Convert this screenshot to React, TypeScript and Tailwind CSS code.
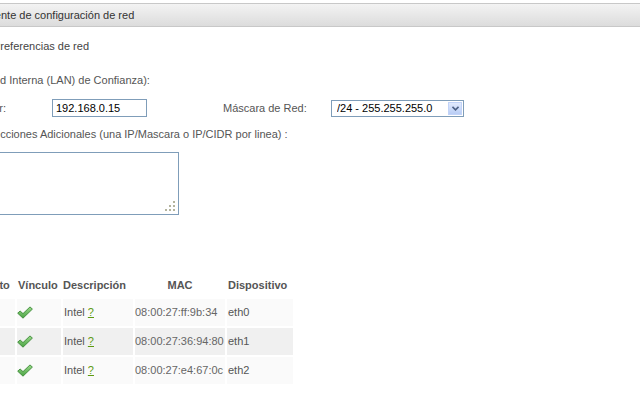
const rows = [
  { mac: '08:00:27:ff:9b:34', dev: 'eth0', bg: 'bg-[#fafafa]' },
  { mac: '08:00:27:36:94:80', dev: 'eth1', bg: 'bg-[#f0f0f0]' },
  { mac: '08:00:27:e4:67:0c', dev: 'eth2', bg: 'bg-[#fafafa]' },
];

function CheckIcon() {
  return (
    <svg width="16" height="13" viewBox="0 0 16 13" className="block">
      <defs>
        <linearGradient id="chk" x1="0" y1="0" x2="0" y2="1">
          <stop offset="0" stopColor="#9ad98a" />
          <stop offset="1" stopColor="#4aa343" />
        </linearGradient>
      </defs>
      <polygon
        points="0.7,7.2 3.1,5 6,7.6 13,0.9 15.4,3.1 6,12.2"
        fill="url(#chk)"
        stroke="#3b8a36"
        strokeWidth="0.9"
        strokeLinejoin="round"
      />
    </svg>
  );
}

function Grip() {
  return (
    <svg width="11" height="11" viewBox="0 0 11 11" className="absolute right-[3px] bottom-[3px]">
      <g fill="#b4b49e">
        <rect x="8" y="0" width="2" height="2" />
        <rect x="8" y="4" width="2" height="2" />
        <rect x="4" y="4" width="2" height="2" />
        <rect x="8" y="8" width="2" height="2" />
        <rect x="4" y="8" width="2" height="2" />
        <rect x="0" y="8" width="2" height="2" />
      </g>
    </svg>
  );
}

export default function App() {
  return (
    <div className="w-[640px] h-[395px] overflow-hidden bg-white font-['Liberation_Sans',Arial,sans-serif] text-[11px] leading-[13px] text-[#555]">
      {/* title bar */}
      <div className="mt-[3px] h-[24px] border-y border-[#c8c8c8] bg-gradient-to-b from-[#f3f3f3] to-[#dcdcdc] flex items-center whitespace-nowrap">
        <span className="-ml-[29px] text-[#333]">Asistente de configuración de red</span>
      </div>

      <p className="mt-[13px] whitespace-nowrap text-[#444]">
        <span className="-ml-[7px]">Preferencias de red</span>
      </p>

      <p className="mt-[21px] whitespace-nowrap">
        <span className="-ml-[14px]">Red Interna (LAN) de Confianza):</span>
      </p>

      <div className="mt-[12px] h-[18px] flex items-center whitespace-nowrap">
        <div className="w-[52px] shrink-0">
          <span className="-ml-[30px]">Router:</span>
        </div>
        <input
          defaultValue="192.168.0.15"
          className="w-[95px] h-[18px] border border-[#7f9db9] px-[3px] text-[11px] text-black outline-none"
        />
        <div className="ml-[76px] w-[108px] shrink-0">Máscara de Red:</div>
        <div className="relative w-[133px] h-[17px]">
          <select className="appearance-none w-full h-full border border-[#7f9db9] bg-white pl-[5px] text-[11px] leading-[15px] text-black outline-none">
            <option>/24 - 255.255.255.0</option>
          </select>
          <div className="absolute right-[2px] top-[2px] w-[14px] h-[13px] border border-[#c2d3f8] bg-gradient-to-b from-[#e1eafd] to-[#b9cdf5] flex items-center justify-center pointer-events-none">
            <svg width="7" height="5" viewBox="0 0 7 5">
              <path d="M0.5 0.8 L3.5 3.8 L6.5 0.8" fill="none" stroke="#4d6185" strokeWidth="1.6" />
            </svg>
          </div>
        </div>
      </div>

      <p className="mt-[11px] whitespace-nowrap">
        <span className="-ml-[20px]">Direcciones Adicionales (una IP/Mascara o IP/CIDR por linea) :</span>
      </p>

      <div className="relative mt-[11px] -ml-[20px] w-[199px] h-[63px]">
        <textarea className="block w-full h-full resize-none border border-[#7f9db9] outline-none" />
        <Grip />
      </div>

      <table className="mt-[62px] -ml-[32px] w-[327px] table-fixed border-separate border-spacing-[2px] whitespace-nowrap">
        <colgroup>
          <col className="w-[45px]" />
          <col className="w-[44px]" />
          <col className="w-[70px]" />
          <col className="w-[90px]" />
          <col className="w-[66px]" />
        </colgroup>
        <thead>
          <tr className="font-bold text-[#555]">
            <th className="h-[18px] p-0 pl-[5px] text-left align-top">Puerto</th>
            <th className="h-[18px] p-0 pl-[1px] text-left align-top">Vínculo</th>
            <th className="h-[18px] p-0 text-left align-top">Descripción</th>
            <th className="h-[18px] p-0 text-center align-top">MAC</th>
            <th className="h-[18px] p-0 pl-[1px] text-left align-top">Dispositivo</th>
          </tr>
        </thead>
        <tbody>
          {rows.map(r => (
            <tr key={r.dev} className="h-[27px] text-[#555]">
              <td className={`p-0 ${r.bg}`}></td>
              <td className={`p-0 align-middle ${r.bg}`}>
                <CheckIcon />
              </td>
              <td className={`p-0 pl-[1px] align-middle ${r.bg}`}>
                Intel <span className="text-[#5c9a10] underline">?</span>
              </td>
              <td className={`p-0 align-middle text-[#666] ${r.bg}`}>{r.mac}</td>
              <td className={`p-0 pl-[1px] align-middle ${r.bg}`}>{r.dev}</td>
            </tr>
          ))}
        </tbody>
      </table>
    </div>
  );
}
